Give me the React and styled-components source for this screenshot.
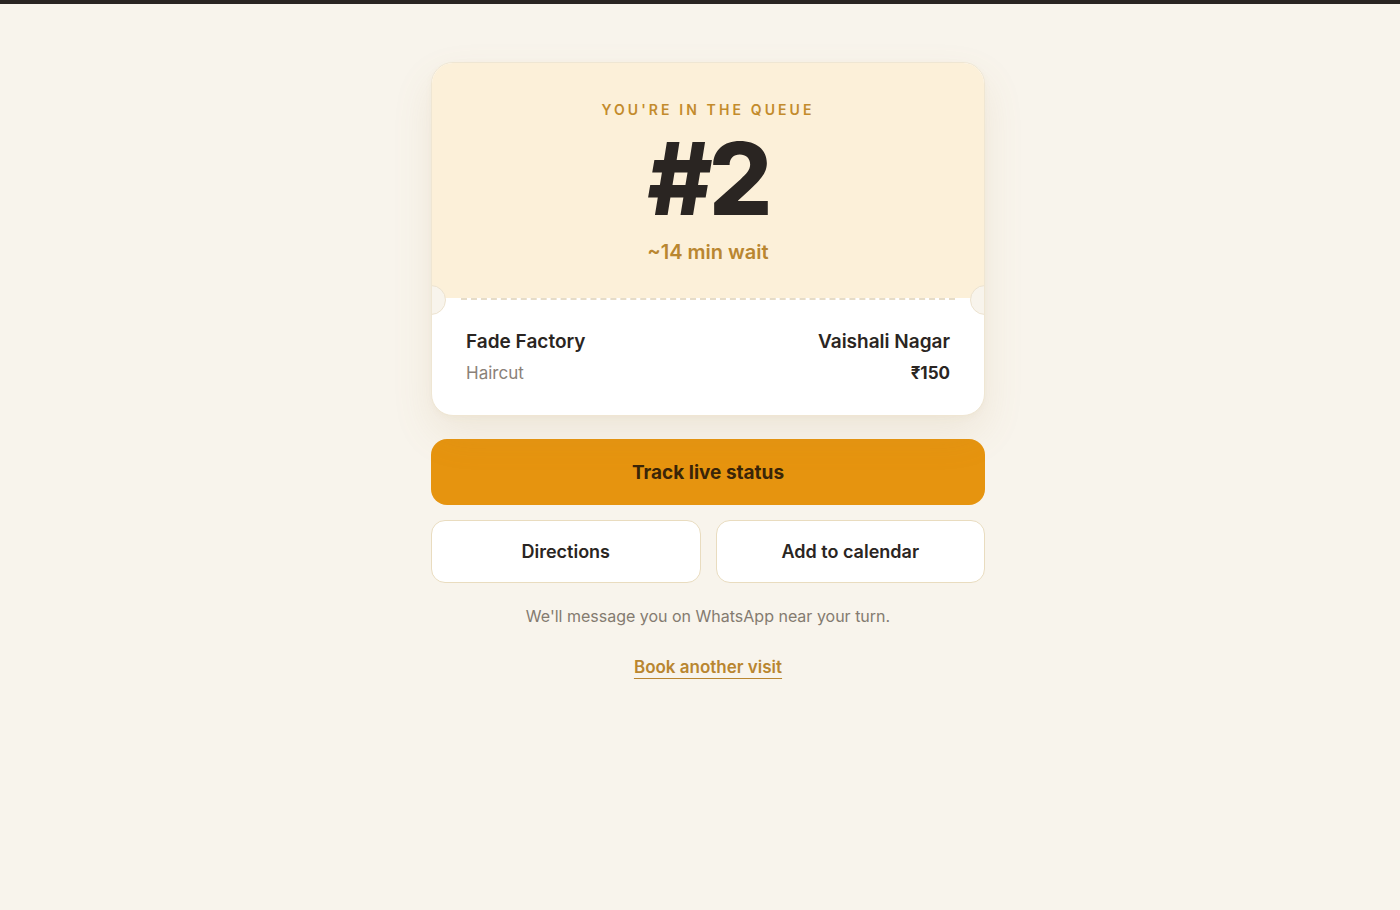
import React from "react";
import styled, { createGlobalStyle } from "styled-components";

const GlobalStyle = createGlobalStyle`
  html, body { margin: 0; padding: 0; }
  body {
    background: #f8f4ec;
    font-family: "Inter", "Noto Sans", sans-serif;
    color: #2a2522;
  }
`;

const TopBar = styled.div`
  height: 4px;
  background: #2a2522;
`;

const Page = styled.main`
  display: flex;
  justify-content: center;
  padding: 58px 0 0 16px;
  min-height: 906px;
  box-sizing: border-box;
`;

const Column = styled.div`
  width: 554px;
  display: flex;
  flex-direction: column;
  align-items: stretch;
`;

const Ticket = styled.section`
  position: relative;
  border-radius: 22px;
  border: 1px solid #efe6d3;
  background: #ffffff;
  box-shadow: 0 18px 40px rgba(170, 140, 80, 0.12), 0 2px 6px rgba(170, 140, 80, 0.05);
  overflow: hidden;
`;

const Stub = styled.div`
  background: #fcf0d9;
  padding: 38px 0 34px;
  text-align: center;
  display: flex;
  flex-direction: column;
  align-items: center;
`;

const Eyebrow = styled.div`
  font-size: 14px;
  font-weight: 600;
  letter-spacing: 3.1px;
  color: #c38b2c;
  line-height: 18px;
`;

const Position = styled.div`
  font-size: 100px;
  font-weight: 800;
  letter-spacing: -4px;
  line-height: 1;
  margin-top: 10px;
  color: #2a2522;
`;

const Wait = styled.div`
  font-size: 20px;
  font-weight: 600;
  color: #b98630;
  margin-top: 11px;
  line-height: 24px;
`;

const Perforation = styled.div`
  position: relative;
  height: 0;
  margin: 0 29px;
  border-top: 2px dashed #e6dcc8;
`;

const Notch = styled.span`
  position: absolute;
  top: -15px;
  ${(p) => (p.$side === "left" ? "left: -45px;" : "right: -45px;")}
  width: 28px;
  height: 28px;
  border-radius: 50%;
  background: #f8f4ec;
  border: 1px solid #ece2cf;
`;

const Details = styled.div`
  display: flex;
  justify-content: space-between;
  padding: 30px 34px 31px;
`;

const DetailGroup = styled.div`
  display: flex;
  flex-direction: column;
  gap: 8px;
  align-items: ${(p) => (p.$right ? "flex-end" : "flex-start")};
`;

const Title = styled.div`
  font-size: 19px;
  font-weight: 600;
  line-height: 24px;
  color: #2a2522;
`;

const Sub = styled.div`
  font-size: 17px;
  line-height: 22px;
  font-weight: ${(p) => (p.$strong ? 700 : 400)};
  color: ${(p) => (p.$strong ? "#2a2522" : "#8a8178")};
`;

const PrimaryButton = styled.button`
  margin-top: 23px;
  height: 66px;
  border: none;
  border-radius: 16px;
  background: #e6940f;
  color: #3a2508;
  font-family: inherit;
  font-size: 19px;
  font-weight: 700;
  cursor: pointer;
`;

const ButtonRow = styled.div`
  display: grid;
  grid-template-columns: 1fr 1fr;
  gap: 15px;
  margin-top: 15px;
`;

const GhostButton = styled.button`
  height: 63px;
  border: 1px solid #e9dcbf;
  border-radius: 14px;
  background: #ffffff;
  color: #2a2522;
  font-family: inherit;
  font-size: 18px;
  font-weight: 600;
  cursor: pointer;
`;

const Note = styled.p`
  margin: 22px 0 0;
  text-align: center;
  font-size: 16px;
  line-height: 22px;
  color: #847b70;
`;

const BookLink = styled.a`
  align-self: center;
  margin-top: 30px;
  font-size: 17px;
  font-weight: 600;
  color: #b98630;
  text-decoration: underline;
  text-underline-offset: 5px;
  text-decoration-thickness: 1px;
  cursor: pointer;
`;

export default function App() {
  return (
    <>
      <GlobalStyle />
      <TopBar />
      <Page>
        <Column>
          <Ticket>
            <Stub>
              <Eyebrow>YOU'RE IN THE QUEUE</Eyebrow>
              <Position>#2</Position>
              <Wait>~14 min wait</Wait>
            </Stub>
            <Perforation>
              <Notch $side="left" />
              <Notch $side="right" />
            </Perforation>
            <Details>
              <DetailGroup>
                <Title>Fade Factory</Title>
                <Sub>Haircut</Sub>
              </DetailGroup>
              <DetailGroup $right>
                <Title>Vaishali Nagar</Title>
                <Sub $strong>₹150</Sub>
              </DetailGroup>
            </Details>
          </Ticket>
          <PrimaryButton>Track live status</PrimaryButton>
          <ButtonRow>
            <GhostButton>Directions</GhostButton>
            <GhostButton>Add to calendar</GhostButton>
          </ButtonRow>
          <Note>We'll message you on WhatsApp near your turn.</Note>
          <BookLink>Book another visit</BookLink>
        </Column>
      </Page>
    </>
  );
}
